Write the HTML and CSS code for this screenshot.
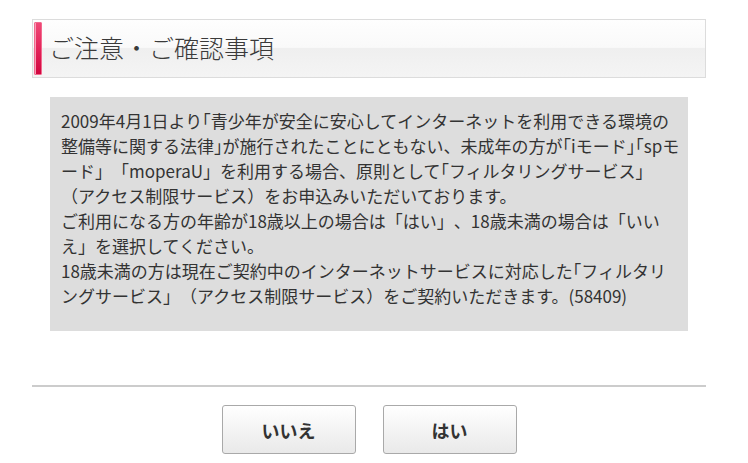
FILE: index.html
```html
<!DOCTYPE html>
<html lang="ja">
<head>
    <meta charset="UTF-8">
    <meta name="viewport" content="width=device-width, initial-scale=1.0">
    <title>ご注意・ご確認事項</title>
    <link rel="stylesheet" href="styles.css">
</head>
<body>
    <div class="container">
        <div class="header">
            <span class="header-bar"></span>
            <h1>ご注意・ご確認事項</h1>
        </div>

        <div class="notice">
            <p>2009年4月1日より｢青少年が安全に安心してインターネットを利用できる環境の整備等に関する法律｣が施行されたことにともない、未成年の方が｢iモード｣｢spモード」「moperaU」を利用する場合、原則として｢フィルタリングサービス｣<br>（アクセス制限サービス）をお申込みいただいております。<br>ご利用になる方の年齢が18歳以上の場合は「はい」、18歳未満の場合は「いいえ」を選択してください。<br>18歳未満の方は現在ご契約中のインターネットサービスに対応した｢フィルタリングサービス」（アクセス制限サービス）をご契約いただきます。(58409)</p>
        </div>

        <div class="actions">
            <button type="button" class="btn">いいえ</button>
            <button type="button" class="btn">はい</button>
        </div>
    </div>
</body>
</html>
```

FILE: styles.css
```css
body {
    font-family: "Noto Sans CJK JP", "Noto Sans", sans-serif;
    margin: 0;
    padding: 0;
    background-color: #fff;
    color: #333;
}
.container {
    width: 674px;
    margin-left: 32px;
    padding-top: 19px;
}
.header {
    display: flex;
    align-items: stretch;
    height: 55px;
    padding: 1px;
    border: 1px solid #dcdcdc;
    background: linear-gradient(to bottom, #fefefe 0%, #f9f9f9 48%, #efefef 50%, #f4f4f4 100%);
}
.header-bar {
    width: 6px;
    margin: 1px 0;
    border: 1px solid #f26a8e;
    border-radius: 1px;
    background: linear-gradient(to bottom, #ef4876 0%, #e3245a 50%, #d0063f 100%);
    box-shadow: inset 1px 0 0 #f6a0b8;
}
.header h1 {
    margin: 0 0 0 7px;
    font-size: 25px;
    font-weight: 300;
    line-height: 53px;
    color: #3a3a3a;
}
.notice {
    margin: 19px 18px 0;
    padding: 11px 7px 23px 11px;
    background-color: #dddddd;
}
.notice p {
    margin: 0;
    font-size: 17px;
    line-height: 25px;
    text-spacing-trim: space-all;
}
.actions {
    margin-top: 54px;
    padding-top: 18px;
    border-top: 2px solid #cccccc;
    display: flex;
    justify-content: center;
    gap: 27px;
}
.btn {
    width: 134px;
    height: 49px;
    font-family: inherit;
    font-size: 18px;
    font-weight: bold;
    color: #333;
    border: 1px solid #a9a9a9;
    border-radius: 3px;
    background: linear-gradient(to bottom, #ffffff 0%, #f4f4f4 50%, #e9e9e9 100%);
    cursor: pointer;
}
.btn:hover {
    background: linear-gradient(to bottom, #ffffff 0%, #ececec 100%);
}
```
